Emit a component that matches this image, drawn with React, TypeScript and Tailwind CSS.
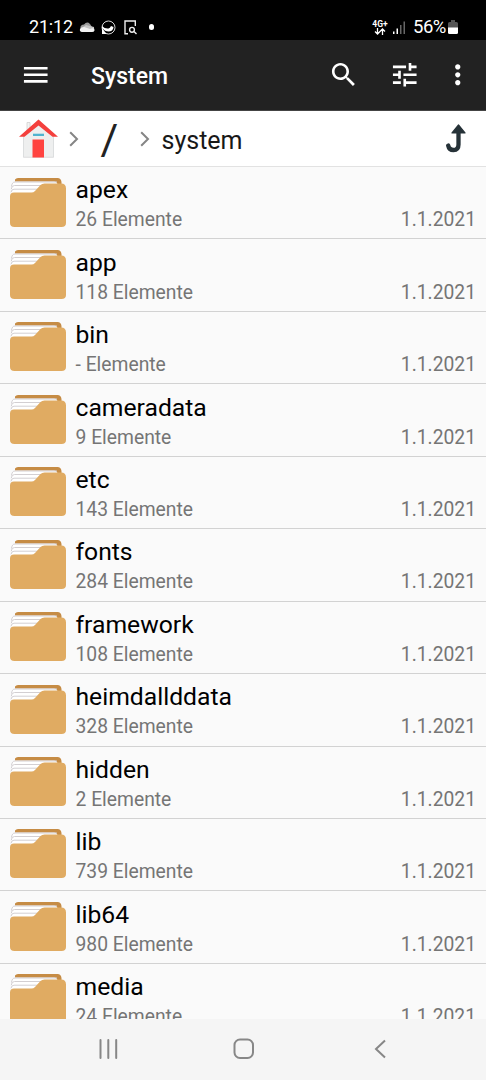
import React from 'react';

interface FolderEntry {
    name: string;
    count: string;
    date: string;
}

const folders: FolderEntry[] = [
    { name: 'apex', count: '26', date: '1.1.2021' },
    { name: 'app', count: '118', date: '1.1.2021' },
    { name: 'bin', count: '-', date: '1.1.2021' },
    { name: 'cameradata', count: '9', date: '1.1.2021' },
    { name: 'etc', count: '143', date: '1.1.2021' },
    { name: 'fonts', count: '284', date: '1.1.2021' },
    { name: 'framework', count: '108', date: '1.1.2021' },
    { name: 'heimdallddata', count: '328', date: '1.1.2021' },
    { name: 'hidden', count: '2', date: '1.1.2021' },
    { name: 'lib', count: '739', date: '1.1.2021' },
    { name: 'lib64', count: '980', date: '1.1.2021' },
    { name: 'media', count: '24', date: '1.1.2021' }
];

function ToolbarIcon({ path }: { path: string }) {
    return (
        <svg viewBox="0 0 24 24" className="h-[31.5px] w-[31.5px] shrink-0 fill-white">
            <path d={path} />
        </svg>
    );
}

function FolderIcon() {
    return (
        <svg viewBox="0 0 56 50" className="h-[50px] w-14 shrink-0">
            <path d="M5 1.500 Q6 0 8 0 H47.500 Q51 0 51.500 4 V12 H5 Z" fill="#c68c45" />
            <path d="M1.500 12 Q1.500 3.500 5 3.500 H44 Q47.500 3.500 47.500 7 V20 H1.500 Z" fill="#fff" />
            <path
                d="M1.500 8.500 Q2 4 5 4 H47 M1.300 11.200 Q1.500 7.500 4.500 7.500 H31 M1 14.300 Q1.500 11.200 4 11.200 H28"
                fill="none"
                stroke="#d3cfd2"
                strokeWidth="1"
            />
            <path
                d="M0 18.500 Q0 14.500 4 14.500 H21.500 Q23.500 14.500 25 13 L30.500 7 Q32 5.500 34.500 5.500 H51 Q56 5.500 56 10.500 V45 Q56 49 51.500 49 H4.500 Q0 49 0 45 Z"
                fill="#e0ab62"
            />
        </svg>
    );
}

function Crumb() {
    return (
        <svg viewBox="0 0 10 16" className="h-4 w-2.5 shrink-0">
            <path d="M1.200 1.200 L8 8 L1.200 14.800" fill="none" stroke="#858585" strokeWidth="2" />
        </svg>
    );
}

function StatusBar() {
    return (
        <div className="flex h-10 shrink-0 items-center bg-black pt-3.5 pr-[28px] pl-[29px] text-white">
            <span className="w-[50px] text-[18px] leading-none tracking-[-0.2px] whitespace-nowrap">21:12</span>
            {/* Cloud */}
            <svg viewBox="0 0 16 11" className="h-[11px] w-4">
                <path d="M2 8 Q0 3 5 2.500 Q8 -1 11 2 L13 5 L6 10 Z" fill="#9b9b9b" />
                <path d="M4 5 L7 3 L15 5 V8 L9 10 Z" fill="#c4c4c4" />
                <path d="M3 10 Q0.300 9.500 1 7 Q2 5 5 5 L11 7 Q16 5 15.500 8.500 Q15 10 13 10 Z" fill="#f1f1f1" />
            </svg>
            {/* Round badge */}
            <svg viewBox="0 0 15 15" className="ml-[5.5px] h-[15px] w-[15px]">
                <circle cx="7.500" cy="7.500" r="6.500" fill="none" stroke="#d6d6d6" strokeWidth="1" />
                <path d="M1 6 Q4 9 7.500 8.500 Q9 8 10 6 L12.500 7 Q12 11.500 7.500 11.500 Q4 11.500 1 8 Z" fill="#fff" />
                <path d="M1 8 L5.500 14 H1 Z" fill="#fff" />
            </svg>
            {/* Document search */}
            <svg viewBox="0 0 13 15" className="ml-[8px] h-[15px] w-[13px]" fill="none" stroke="#eee" strokeWidth="1.400">
                <path d="M4 13.700 H1 V1 H11.300 V6" />
                <circle cx="8" cy="9.800" r="2.400" />
                <path d="M10 11.500 L12.500 14" />
            </svg>
            <span className="ml-[12px] h-[5.5px] w-[5.5px] rounded-full bg-white" />
            <div className="ml-auto flex items-center">
                <div className="flex w-4 flex-col items-center">
                    <span className="text-[8.5px] leading-[8px] font-bold">4G+</span>
                    <svg viewBox="0 0 12 7" className="h-[7px] w-3" fill="none" stroke="#fff" strokeWidth="1.300">
                        <path d="M3.500 0 V6 M1 3.500 L3.500 6 L6 3.500 M8.500 7 V1 M6 3.500 L8.500 1 L11 3.500" />
                    </svg>
                </div>
                <svg viewBox="0 0 13 14" className="ml-[5px] h-3.5 w-[13px]">
                    <path d="M0 11.500 H1.500 V14 H0 Z M3.500 8.500 H5 V14 H3.500 Z" fill="#fff" />
                    <path d="M7 5 H8.500 V14 H7 Z M10.500 1.500 H12 V14 H10.500 Z" fill="#666" />
                </svg>
                <span className="ml-[7px] w-[33px] text-[18.5px] leading-none tracking-[-0.5px]">56%</span>
                <svg viewBox="0 0 10 14" className="ml-[2px] h-3.5 w-2.5">
                    <path d="M3 0 H7 V2 H8.500 Q10 2 10 3.500 V8 H0 V3.500 Q0 2 1.500 2 H3 Z" fill="#555" />
                    <path d="M0 7.500 H10 V12.500 Q10 14 8.500 14 H1.500 Q0 14 0 12.500 Z" fill="#fff" />
                </svg>
            </div>
        </div>
    );
}

function Toolbar() {
    return (
        <div className="flex h-[71px] shrink-0 items-center border-b border-[#444] bg-[#222] pr-[12.5px] pl-[20px]">
            <ToolbarIcon path="M3 18h18v-2H3v2zm0-5h18v-2H3v2zm0-7v2h18V6H3z" />
            <h1 className="ml-[39.5px] pt-[3px] text-[23px] leading-none font-medium text-white">System</h1>
            <div className="ml-auto flex">
                <ToolbarIcon path="M15.500 14h-.79l-.28-.27C15.410 12.590 16 11.110 16 9.500 16 5.910 13.090 3 9.500 3S3 5.910 3 9.500 5.910 16 9.500 16c1.610 0 3.090-.59 4.230-1.570l.27.28v.79l5 4.990L20.490 19l-4.990-5zm-6 0C7.010 14 5 11.990 5 9.500S7.010 5 9.500 5 14 7.010 14 9.500 11.990 14 9.500 14z" />
                <div className="ml-[29.5px] flex">
                    <ToolbarIcon path="M3 17v2h6v-2H3zM3 5v2h10V5H3zm10 16v-2h8v-2h-8v-2h-2v6h2zM7 9v2H3v2h4v2h2V9H7zm14 4v-2H11v2h10zm-6-4h2V7h4V5h-4V3h-2v6z" />
                </div>
                <div className="ml-[21.5px] flex">
                    <ToolbarIcon path="M12 8c1.100 0 2-.9 2-2s-.9-2-2-2-2 .9-2 2 .9 2 2 2zm0 2c-1.100 0-2 .9-2 2s.9 2 2 2 2-.9 2-2-.9-2-2-2zm0 6c-1.100 0-2 .9-2 2s.9 2 2 2 2-.9 2-2-.9-2-2-2z" />
                </div>
            </div>
        </div>
    );
}

function Breadcrumbs() {
    return (
        <div className="flex h-[56px] shrink-0 items-center border-b border-[#e2e2e2] bg-white pt-px pr-[20.5px] pl-[18.5px]">
            {/* Home */}
            <svg viewBox="0 0 39 39" className="-mt-px h-[39px] w-[39px]">
                <path d="M8 13 V3.500 H11 V10" fill="#f3f3f3" stroke="#d0d0d0" strokeWidth="0.800" />
                <path d="M4.500 17 L19.500 4 L34.500 17 V38.300 H4.500 Z" fill="#eeefef" stroke="#d5d7d8" strokeWidth="0.800" />
                <path d="M19.500 0.500 L39 17.800 H33.500 L19.500 6.500 L5.500 17.800 H0 Z" fill="#f4403d" />
                <path d="M14 14.700 H25 V17 H14 Z" fill="#50b4d0" />
                <path d="M13.500 20.500 H25 V38.500 H13.500 Z" fill="#ff4340" />
            </svg>
            <div className="ml-[11.5px] flex">
                <Crumb />
            </div>
            <span className="ml-[21.5px] w-[16px] text-[43px] leading-none text-[#222]">/</span>
            <div className="ml-[23.5px] flex">
                <Crumb />
            </div>
            <span className="ml-[11.5px] pt-0.5 text-[25px] leading-none text-[#181818]">system</span>
            {/* One level up */}
            <svg viewBox="0 0 20 29" className="-mt-px ml-auto h-[29px] w-5">
                <path d="M12.500 8 V20.500 Q12.500 26 7.500 26 Q3 26 2.200 21.500" fill="none" stroke="#263238" strokeWidth="4.300" strokeLinecap="round" />
                <path d="M12.500 1 L19 9 H6 Z" fill="#263238" stroke="#263238" strokeWidth="1.200" strokeLinejoin="round" />
            </svg>
        </div>
    );
}

function FolderRow({ folder }: { folder: FolderEntry }) {
    return (
        <div className="flex h-[72.45px] shrink-0 border-b border-[#d2d2d2] pr-[10px] pl-[9.5px]">
            <div className="pt-[10.5px]">
                <FolderIcon />
            </div>
            <div className="ml-[10px] flex flex-1 flex-col">
                <span className="pt-[8.2px] text-[24.7px] leading-[30px] text-black">{folder.name}</span>
                <div className="flex justify-between text-[19.3px] leading-[30.5px] text-[#757575]">
                    <span>{folder.count} Elemente</span>
                    <span>{folder.date}</span>
                </div>
            </div>
        </div>
    );
}

function NavigationBar() {
    return (
        <div className="flex h-[61px] shrink-0 items-center justify-between bg-[#f5f5f5] pr-[99px] pb-px pl-[98px]">
            <svg viewBox="0 0 20 20" className="h-5 w-5">
                <path d="M2.500 1 V19 M10.300 1 V19 M18.200 1 V19" stroke="#878787" strokeWidth="2" strokeLinecap="round" />
            </svg>
            <svg viewBox="0 0 22 22" className="mr-[4px] h-[22px] w-[22px]">
                <rect x="1.500" y="1.500" width="18.500" height="18.500" rx="5.500" fill="none" stroke="#878787" strokeWidth="2" />
            </svg>
            <svg viewBox="0 0 13 20" className="h-5 w-[13px]">
                <path d="M11 1.500 L2 10 L11 18.500" fill="none" stroke="#878787" strokeWidth="2" />
            </svg>
        </div>
    );
}

export default function App(): React.ReactElement {
    return (
        <div className="flex h-[1080px] w-[486px] flex-col overflow-hidden bg-[#fafafa] font-[Roboto,sans-serif]">
            <StatusBar />
            <Toolbar />
            <Breadcrumbs />
            <div className="flex min-h-0 flex-1 flex-col overflow-hidden">
                {folders.map((folder) => (
                    <FolderRow key={folder.name} folder={folder} />
                ))}
            </div>
            <NavigationBar />
        </div>
    );
}
